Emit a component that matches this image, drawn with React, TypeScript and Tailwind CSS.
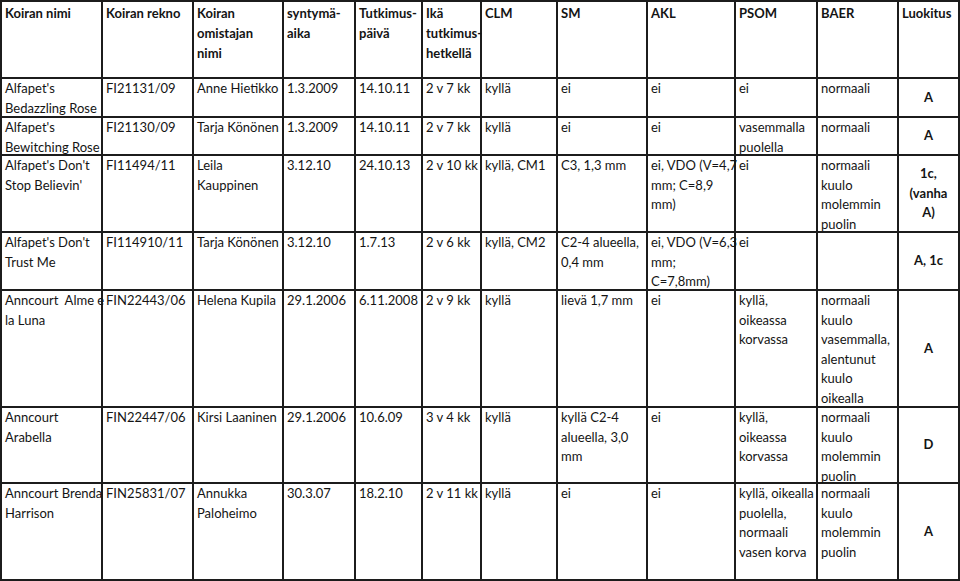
import React from "react";

const header: string[][] = [
  ["Koiran nimi"],
  ["Koiran rekno"],
  ["Koiran", "omistajan", "nimi"],
  ["syntymä-", "aika"],
  ["Tutkimus-", "päivä"],
  ["Ikä", "tutkimus-", "hetkellä"],
  ["CLM"],
  ["SM"],
  ["AKL"],
  ["PSOM"],
  ["BAER"],
  ["Luokitus"],
];

const rows: string[][][] = [
  [
    ["Alfapet's", "Bedazzling Rose"],
    ["FI21131/09"],
    ["Anne Hietikko"],
    ["1.3.2009"],
    ["14.10.11"],
    ["2 v 7 kk"],
    ["kyllä"],
    ["ei"],
    ["ei"],
    ["ei"],
    ["normaali"],
    ["A"],
  ],
  [
    ["Alfapet's", "Bewitching Rose"],
    ["FI21130/09"],
    ["Tarja Könönen"],
    ["1.3.2009"],
    ["14.10.11"],
    ["2 v 7 kk"],
    ["kyllä"],
    ["ei"],
    ["ei"],
    ["vasemmalla", "puolella"],
    ["normaali"],
    ["A"],
  ],
  [
    ["Alfapet's Don't", "Stop Believin'"],
    ["FI11494/11"],
    ["Leila", "Kauppinen"],
    ["3.12.10"],
    ["24.10.13"],
    ["2 v 10 kk"],
    ["kyllä, CM1"],
    ["C3, 1,3 mm"],
    ["ei, VDO (V=4,7", "mm; C=8,9", "mm)"],
    ["ei"],
    ["normaali", "kuulo", "molemmin", "puolin"],
    ["1c,", "(vanha", "A)"],
  ],
  [
    ["Alfapet's Don't", "Trust Me"],
    ["FI114910/11"],
    ["Tarja Könönen"],
    ["3.12.10"],
    ["1.7.13"],
    ["2 v 6 kk"],
    ["kyllä, CM2"],
    ["C2-4 alueella,", "0,4 mm"],
    ["ei, VDO (V=6,3", "mm;", "C=7,8mm)"],
    ["ei"],
    [],
    ["A, 1c"],
  ],
  [
    ["Anncourt\u00a0\u00a0Alme e", "la Luna"],
    ["FIN22443/06"],
    ["Helena Kupila"],
    ["29.1.2006"],
    ["6.11.2008"],
    ["2 v 9 kk"],
    ["kyllä"],
    ["lievä 1,7 mm"],
    ["ei"],
    ["kyllä,", "oikeassa", "korvassa"],
    ["normaali", "kuulo", "vasemmalla,", "alentunut", "kuulo", "oikealla"],
    ["A"],
  ],
  [
    ["Anncourt", "Arabella"],
    ["FIN22447/06"],
    ["Kirsi Laaninen"],
    ["29.1.2006"],
    ["10.6.09"],
    ["3 v 4 kk"],
    ["kyllä"],
    ["kyllä C2-4", "alueella, 3,0", "mm"],
    ["ei"],
    ["kyllä,", "oikeassa", "korvassa"],
    ["normaali", "kuulo", "molemmin", "puolin"],
    ["D"],
  ],
  [
    ["Anncourt Brenda", "Harrison"],
    ["FIN25831/07"],
    ["Annukka", "Paloheimo"],
    ["30.3.07"],
    ["18.2.10"],
    ["2 v 11 kk"],
    ["kyllä"],
    ["ei"],
    ["ei"],
    ["kyllä, oikealla", "puolella,", "normaali", "vasen korva"],
    ["normaali", "kuulo", "molemmin", "puolin"],
    ["A"],
  ],
];

function Lines({ lines }: { lines: string[] }) {
  return (
    <>
      {lines.map((l, i) => (
        <div key={i} className="whitespace-pre">
          {l}
        </div>
      ))}
    </>
  );
}

export default function App() {
  return (
    <div
      className="w-[960px] h-[581px] bg-white overflow-hidden text-[#141414]"
      style={{ fontFamily: "Lato, 'Open Sans', sans-serif" }}
    >
      <div className="grid grid-cols-[101px_91px_90px_72px_67px_59px_76px_90px_88px_82px_81px_61px] grid-rows-[77px_39px_38px_77px_58px_117px_76px_97px] w-[960px] border-l-2 border-t-2 border-[#1c1c1c] text-[13px] leading-[19.5px]">
        {header.map((c, i) => (
          <div
            key={"h" + i}
            className="border-r-2 border-b-2 border-[#1c1c1c] font-bold pl-[3px] pt-[1px] leading-[20px]"
          >
            <Lines lines={c} />
          </div>
        ))}
        {rows.map((r, ri) =>
          r.map((c, ci) =>
            ci === 11 ? (
              <div
                key={ri + "-" + ci}
                className="border-r-2 border-b-2 border-[#1c1c1c] font-bold flex flex-col items-center justify-center text-center"
              >
                <Lines lines={c} />
              </div>
            ) : (
              <div
                key={ri + "-" + ci}
                className="border-r-2 border-b-2 border-[#1c1c1c] pl-[3px] pt-0"
              >
                <Lines lines={c} />
              </div>
            )
          )
        )}
      </div>
    </div>
  );
}
